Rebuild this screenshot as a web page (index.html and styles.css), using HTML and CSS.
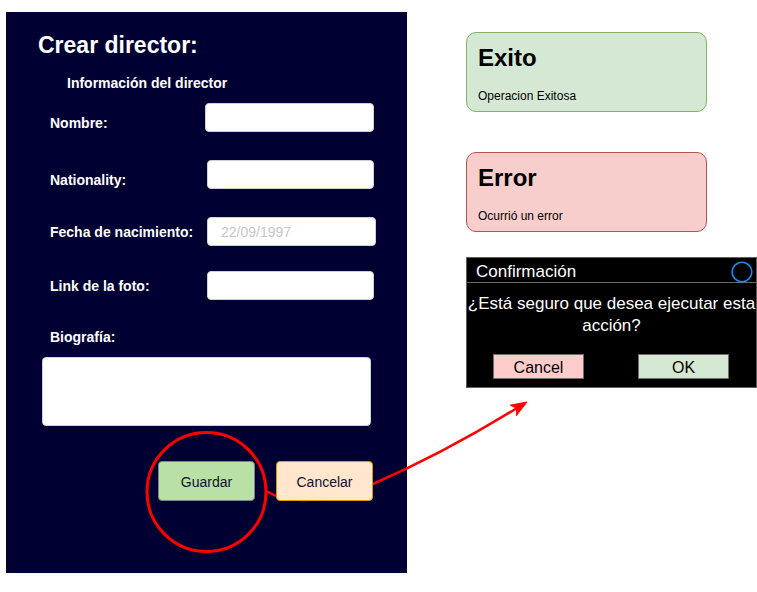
FILE: index.html
```html
<!DOCTYPE html>
<html lang="es">
<head>
<meta charset="utf-8">
<title>Crear director</title>
<link rel="stylesheet" href="styles.css">
</head>
<body>
<div class="page">
  <section class="panel">
    <h1 class="title">Crear director:</h1>
    <h2 class="subtitle">Información del director</h2>
    <div class="field field--low field--first"><label class="label">Nombre:</label><input class="input input--wide" type="text"></div>
    <div class="field field--low field--gap"><label class="label">Nationality:</label><input class="input" type="text"></div>
    <div class="field field--gap"><label class="label">Fecha de nacimiento:</label><input class="input input--date" type="text" placeholder="22/09/1997"></div>
    <div class="field field--gap2"><label class="label">Link de la foto:</label><input class="input" type="text"></div>
    <div class="label label--bio">Biografía:</div>
    <textarea class="textarea"></textarea>
    <div class="actions">
      <button class="btn btn--save" type="button">Guardar</button>
      <button class="btn btn--cancel" type="button">Cancelar</button>
    </div>
  </section>

  <aside class="side">
    <div class="card card--ok">
      <div class="card-title">Exito</div>
      <div class="card-text">Operacion Exitosa</div>
    </div>
    <div class="card card--err">
      <div class="card-title">Error</div>
      <div class="card-text">Ocurrió un error</div>
    </div>
    <div class="dialog">
      <div class="dialog-head">
        <span class="dialog-title">Confirmación</span>
        <svg class="dialog-close" width="22" height="22" viewBox="0 0 22 22" aria-hidden="true"><circle cx="11" cy="11" r="9.8" fill="none" stroke="#1a86ee" stroke-width="1.6"/></svg>
      </div>
      <div class="dialog-msg">¿Está seguro que desea ejecutar esta<br>acción?</div>
      <div class="dialog-actions">
        <button class="dbtn dbtn--cancel" type="button">Cancel</button>
        <button class="dbtn dbtn--ok" type="button">OK</button>
      </div>
    </div>
  </aside>

  <svg class="annot" width="757" height="592" viewBox="0 0 757 592" aria-hidden="true">
    <circle cx="206.5" cy="492" r="59.5" fill="none" stroke="#ff0000" stroke-width="3"/>
    <path d="M266 491 Q300 512 373 484 Q444 453 516.7 408.2" fill="none" stroke="#ff0000" stroke-width="2.5"/>
    <polygon points="527,402 516.4,415.6 516.7,408.2 510.2,405.2" fill="#ff0000" stroke="#ff0000" stroke-width="1"/>
  </svg>
</div>
</body>
</html>
```

FILE: styles.css
```css
* { box-sizing: border-box; }

html, body {
  margin: 0;
  padding: 0;
  background: #ffffff;
}

body {
  font-family: "Liberation Sans", Arial, sans-serif;
}

.page {
  position: relative;
  display: flex;
  align-items: flex-start;
  width: 757px;
  height: 592px;
  overflow: hidden;
}

/* ---------- Left form panel ---------- */
.panel {
  margin: 12px 0 0 6px;
  width: 401px;
  height: 561px;
  background: #000033;
  padding: 22px 0 0 44px;
  color: #ffffff;
  display: flex;
  flex-direction: column;
}

.title {
  margin: 0 0 0 -12px;
  font-size: 23px;
  line-height: 23px;
  font-weight: bold;
}

.subtitle {
  margin: 19px 0 0 17px;
  font-size: 14px;
  line-height: 14px;
  font-weight: bold;
}

.field {
  display: flex;
  align-items: center;
  height: 29px;
}

.field--first { margin-top: 13px; }
.field--gap { margin-top: 28px; }
.field--gap2 { margin-top: 25px; }

.label {
  display: block;
  width: 157px;
  font-size: 14px;
  line-height: 14px;
  font-weight: bold;
  color: #ffffff;
}

.field--low .label { margin-top: 11px; }

.input {
  width: 167px;
  height: 29px;
  border: 1px solid #d0d0d0;
  border-radius: 4px;
  background: #ffffff;
  padding: 0 13px;
  font-family: "Liberation Sans", Arial, sans-serif;
  font-size: 14px;
  color: #333333;
  outline: none;
}

.input--wide {
  width: 169px;
  margin-left: -2px;
}

.input--date { width: 169px; }

.input::placeholder { color: #c6c6c6; }

.label--bio { margin-top: 30px; }

.textarea {
  display: block;
  margin: 13px 0 0 -8px;
  width: 329px;
  height: 69px;
  border: 1px solid #d0d0d0;
  border-radius: 4px;
  background: #ffffff;
  resize: none;
  outline: none;
}

.actions {
  display: flex;
  gap: 21px;
  margin: 35px 0 0 108px;
}

.btn {
  position: relative;
  z-index: 2;
  width: 97px;
  height: 40px;
  border-radius: 4px;
  font-family: "Liberation Sans", Arial, sans-serif;
  font-size: 14px;
  color: #0f0f33;
  padding: 1px 0 0;
  cursor: pointer;
}

.btn--save {
  background: #b9e0a5;
  border: 1px solid #7a8290;
}

.btn--cancel {
  background: #ffe6cc;
  border: 1px solid #d79b00;
}

/* ---------- Right column ---------- */
.side {
  margin: 32px 0 0 59px;
  width: 291px;
  display: flex;
  flex-direction: column;
}

.card {
  width: 241px;
  height: 80px;
  border: 1px solid;
  border-radius: 10px;
  padding: 13px 11px 0;
  color: #000000;
}

.card--ok {
  background: #d5e8d4;
  border-color: #82b366;
}

.card--err {
  margin-top: 40px;
  background: #f8cecc;
  border-color: #b85450;
}

.card-title {
  font-size: 24px;
  line-height: 24px;
  font-weight: bold;
}

.card-text {
  margin-top: 20px;
  font-size: 12px;
  line-height: 12px;
}

.dialog {
  margin-top: 25px;
  width: 291px;
  height: 131px;
  background: #000000;
  border: 1px solid #5e5e5e;
  color: #ffffff;
}

.dialog-head {
  display: flex;
  align-items: center;
  justify-content: space-between;
  height: 25px;
  padding: 0 3px 0 9px;
  border-bottom: 1px solid #6a6a6a;
}

.dialog-title {
  font-size: 17px;
  line-height: 20px;
  padding-top: 3px;
}

.dialog-close {
  display: block;
  margin-top: 4px;
}

.dialog-msg {
  margin-top: 10px;
  font-size: 17px;
  line-height: 22px;
  text-align: center;
  white-space: nowrap;
}

.dialog-actions {
  display: flex;
  gap: 54px;
  margin: 17px 0 0 26px;
}

.dbtn {
  width: 91px;
  height: 25px;
  border: 1px solid #6e6e6e;
  border-radius: 0;
  font-family: "Liberation Sans", Arial, sans-serif;
  font-size: 16px;
  color: #000000;
  padding: 2px 0 0;
}

.dbtn--cancel { background: #ffcccc; }
.dbtn--ok { background: #d5e8d4; }

/* ---------- Annotation overlay ---------- */
.annot {
  position: absolute;
  left: 0;
  top: 0;
  z-index: 1;
  pointer-events: none;
}
```
